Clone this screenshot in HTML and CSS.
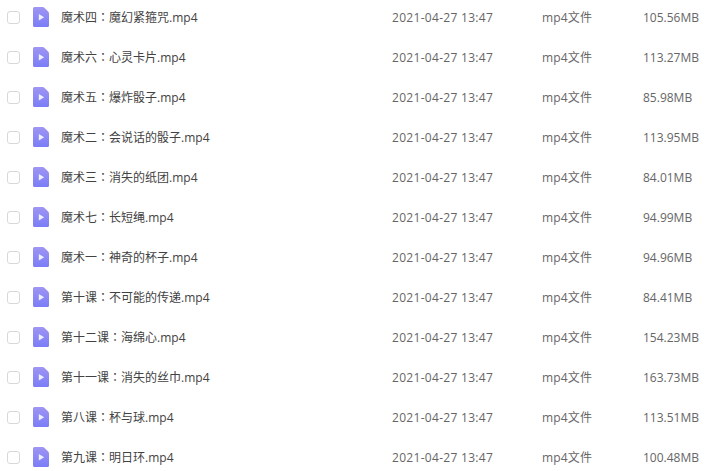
FILE: index.html
```html
<!DOCTYPE html>
<html lang="zh-CN">
<head>
<meta charset="utf-8">
<title>文件列表</title>
<link rel="stylesheet" href="styles.css">
</head>
<body>
<svg class="defs" width="0" height="0" aria-hidden="true">
  <defs>
    <linearGradient id="fileGrad" x1="0" y1="0" x2="0" y2="1">
      <stop offset="0" stop-color="#9f95f2"/>
      <stop offset="1" stop-color="#7b7df7"/>
    </linearGradient>
    <symbol id="video" viewBox="0 0 16 20">
      <path d="M1.500 0H9.500C10.300 0 11 .3 11.600 .9L15.100 4.400C15.700 5 16 5.700 16 6.500V18.500A1.500 1.500 0 0 1 14.500 20H1.500A1.500 1.500 0 0 1 0 18.500V1.500A1.500 1.500 0 0 1 1.500 0Z" fill="url(#fileGrad)"/>
      <path d="M5.800 7L11.200 10.200L5.800 13.400Z" fill="#eef0ff"/>
    </symbol>
  </defs>
</svg>
<ul class="list">
  <li class="row"><span class="check"></span><svg class="icon"><use href="#video"/></svg><span class="name">魔术四<span class="colon" lang="zh-Hant">：</span>魔幻紧箍咒.mp4</span><span class="date">2021-04-27 13:47</span><span class="type">mp4文件</span><span class="size">105.56MB</span></li>
  <li class="row"><span class="check"></span><svg class="icon"><use href="#video"/></svg><span class="name">魔术六<span class="colon" lang="zh-Hant">：</span>心灵卡片.mp4</span><span class="date">2021-04-27 13:47</span><span class="type">mp4文件</span><span class="size">113.27MB</span></li>
  <li class="row"><span class="check"></span><svg class="icon"><use href="#video"/></svg><span class="name">魔术五<span class="colon" lang="zh-Hant">：</span>爆炸骰子.mp4</span><span class="date">2021-04-27 13:47</span><span class="type">mp4文件</span><span class="size">85.98MB</span></li>
  <li class="row"><span class="check"></span><svg class="icon"><use href="#video"/></svg><span class="name">魔术二<span class="colon" lang="zh-Hant">：</span>会说话的骰子.mp4</span><span class="date">2021-04-27 13:47</span><span class="type">mp4文件</span><span class="size">113.95MB</span></li>
  <li class="row"><span class="check"></span><svg class="icon"><use href="#video"/></svg><span class="name">魔术三<span class="colon" lang="zh-Hant">：</span>消失的纸团.mp4</span><span class="date">2021-04-27 13:47</span><span class="type">mp4文件</span><span class="size">84.01MB</span></li>
  <li class="row"><span class="check"></span><svg class="icon"><use href="#video"/></svg><span class="name">魔术七<span class="colon" lang="zh-Hant">：</span>长短绳.mp4</span><span class="date">2021-04-27 13:47</span><span class="type">mp4文件</span><span class="size">94.99MB</span></li>
  <li class="row"><span class="check"></span><svg class="icon"><use href="#video"/></svg><span class="name">魔术一<span class="colon" lang="zh-Hant">：</span>神奇的杯子.mp4</span><span class="date">2021-04-27 13:47</span><span class="type">mp4文件</span><span class="size">94.96MB</span></li>
  <li class="row"><span class="check"></span><svg class="icon"><use href="#video"/></svg><span class="name">第十课<span class="colon" lang="zh-Hant">：</span>不可能的传递.mp4</span><span class="date">2021-04-27 13:47</span><span class="type">mp4文件</span><span class="size">84.41MB</span></li>
  <li class="row"><span class="check"></span><svg class="icon"><use href="#video"/></svg><span class="name">第十二课<span class="colon" lang="zh-Hant">：</span>海绵心.mp4</span><span class="date">2021-04-27 13:47</span><span class="type">mp4文件</span><span class="size">154.23MB</span></li>
  <li class="row"><span class="check"></span><svg class="icon"><use href="#video"/></svg><span class="name">第十一课<span class="colon" lang="zh-Hant">：</span>消失的丝巾.mp4</span><span class="date">2021-04-27 13:47</span><span class="type">mp4文件</span><span class="size">163.73MB</span></li>
  <li class="row"><span class="check"></span><svg class="icon"><use href="#video"/></svg><span class="name">第八课<span class="colon" lang="zh-Hant">：</span>杯与球.mp4</span><span class="date">2021-04-27 13:47</span><span class="type">mp4文件</span><span class="size">113.51MB</span></li>
  <li class="row"><span class="check"></span><svg class="icon"><use href="#video"/></svg><span class="name">第九课<span class="colon" lang="zh-Hant">：</span>明日环.mp4</span><span class="date">2021-04-27 13:47</span><span class="type">mp4文件</span><span class="size">100.48MB</span></li>
</ul>
</body>
</html>
```
FILE: styles.css
```css
html, body {
  margin: 0;
  padding: 0;
  background: #fff;
  overflow: hidden;
}
body {
  height: 471px;
  font: 12px/20px "Open Sans", "Noto Sans CJK SC", sans-serif;
  color: #666;
}
.defs {
  display: block;
  height: 0;
}
.list {
  list-style: none;
  margin: -3px 0 0;
  padding: 0;
}
.row {
  display: flex;
  align-items: center;
  height: 40px;
}
.check {
  box-sizing: border-box;
  flex: none;
  width: 13px;
  height: 13px;
  margin-left: 7px;
  border: 1px solid #d8d8d8;
  border-radius: 3px;
  background: #fff;
}
.icon {
  flex: none;
  width: 16px;
  height: 20px;
  margin-left: 13px;
}
.date,
.type,
.size {
  flex: none;
  padding-top: 2px;
}
.name {
  flex: none;
  width: 331px;
  margin-left: 12px;
  color: #424242;
}
.colon {
  font-family: "Noto Sans CJK TC", sans-serif;
}
.date {
  width: 150px;
  letter-spacing: .3px;
}
.type {
  width: 101px;
  letter-spacing: .15px;
}
```
